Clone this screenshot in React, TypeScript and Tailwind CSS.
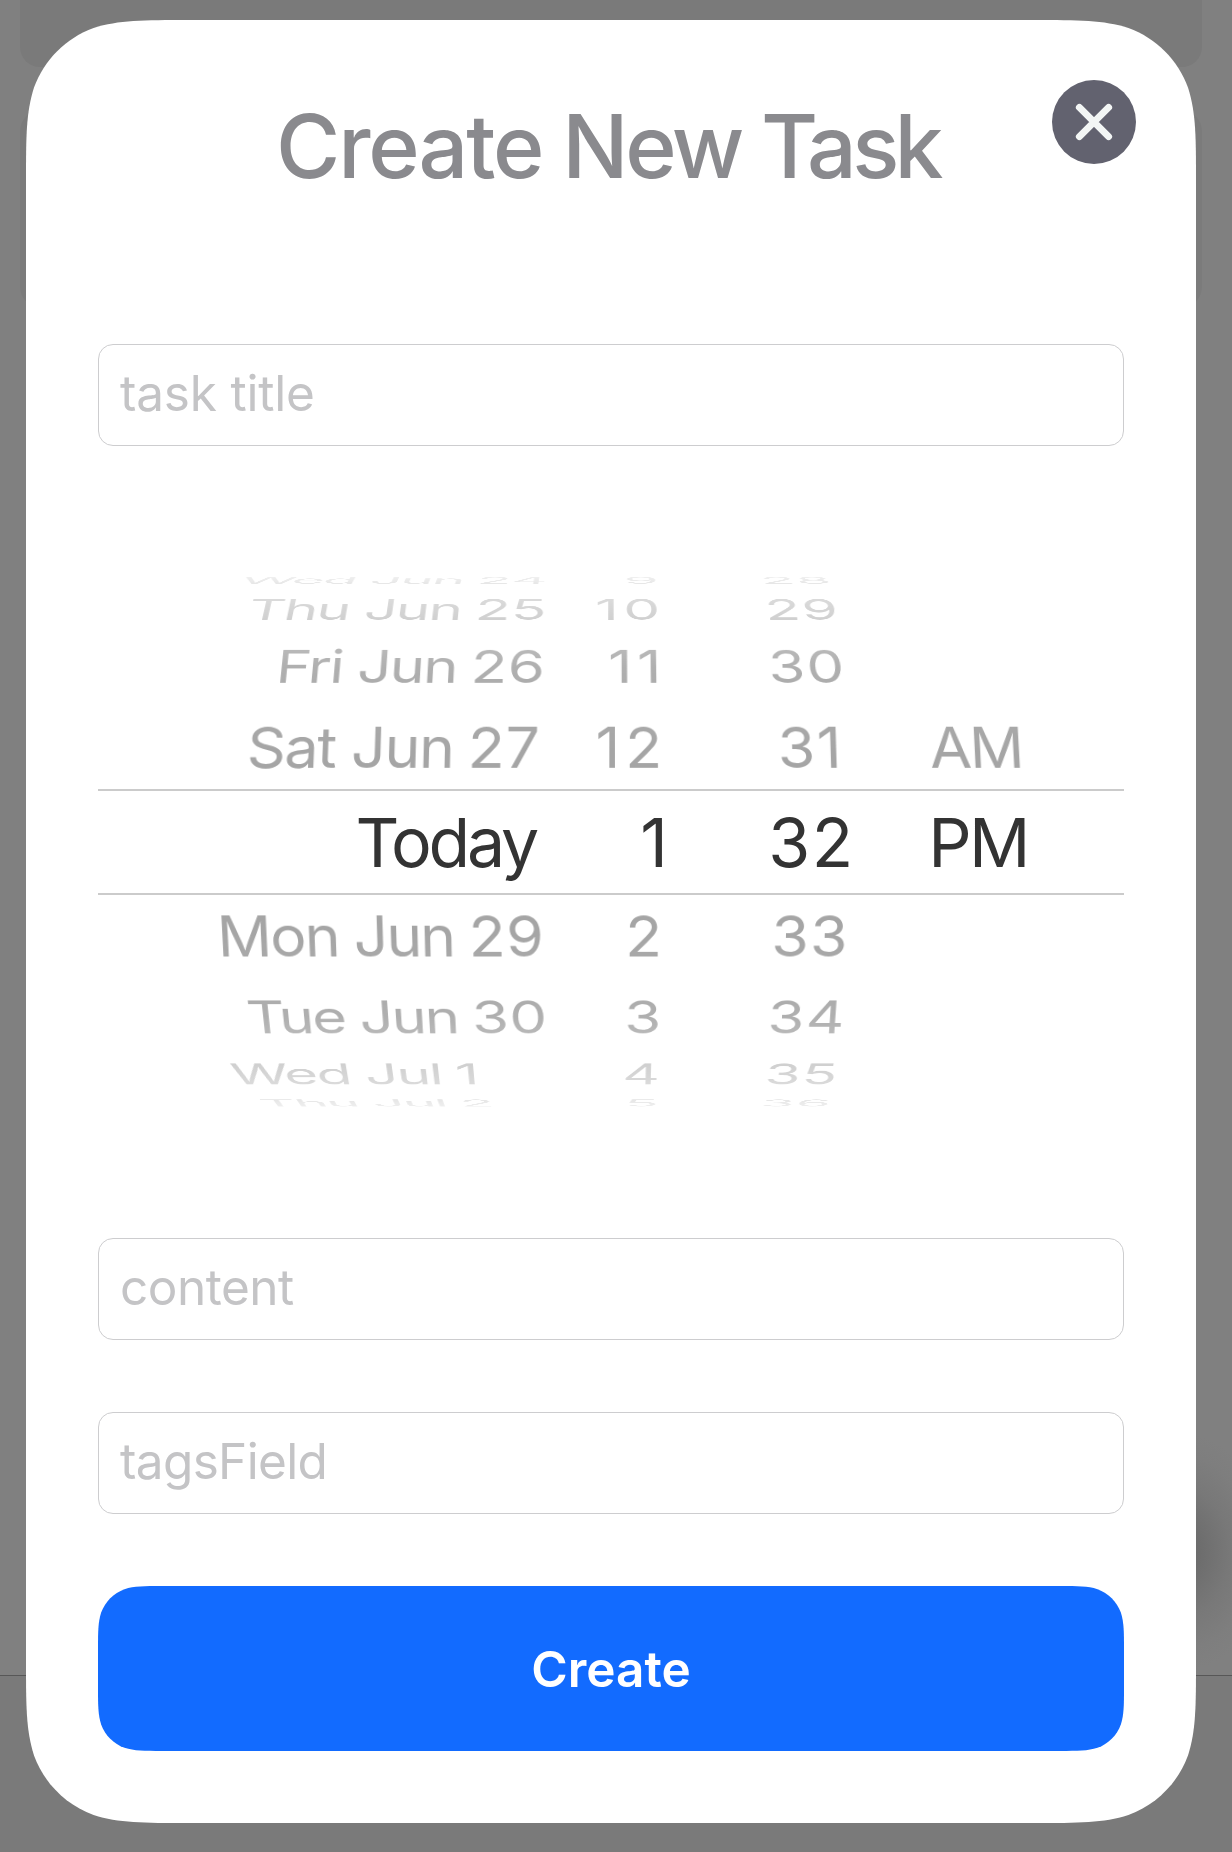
import type { CSSProperties, ReactNode } from "react";

/**
 * Outline of a rectangle with smooth "continuous" corners, where the
 * curvature eases into the straight edges instead of starting abruptly.
 */
function continuousCorners(w: number, h: number, r: number): CSSProperties {
  const a = 1.52866498 * r;
  const b = 1.08849296 * r;
  const c = 0.86840694 * r;
  const d = 0.63149379 * r;
  const e = 0.37282383 * r;
  const f = 0.16905956 * r;
  const g = 0.07491139 * r;
  const path = [
    `M${a} 0L${w - a} 0`,
    `C${w - b} 0 ${w - c} 0 ${w - d} ${g}`,
    `C${w - e} ${f} ${w - f} ${e} ${w - g} ${d}`,
    `C${w} ${c} ${w} ${b} ${w} ${a}`,
    `L${w} ${h - a}`,
    `C${w} ${h - b} ${w} ${h - c} ${w - g} ${h - d}`,
    `C${w - f} ${h - e} ${w - e} ${h - f} ${w - d} ${h - g}`,
    `C${w - c} ${h} ${w - b} ${h} ${w - a} ${h}`,
    `L${a} ${h}`,
    `C${b} ${h} ${c} ${h} ${d} ${h - g}`,
    `C${e} ${h - f} ${f} ${h - e} ${g} ${h - d}`,
    `C0 ${h - c} 0 ${h - b} 0 ${h - a}`,
    `L0 ${a}`,
    `C0 ${b} 0 ${c} ${g} ${d}`,
    `C${f} ${e} ${e} ${f} ${d} ${g}`,
    `C${c} 0 ${b} 0 ${a} 0Z`,
  ].join("");
  return { clipPath: `path("${path}")` };
}

function Backdrop() {
  return (
    <div className="absolute inset-0 flex flex-col bg-[#808080]">
      <div className="ml-5 mr-[30px] h-[67px] rounded-b-[20px] bg-[#7a7a7a]" />
      <div className="ml-5 mr-[30px] mt-11 h-[196px] rounded-[20px] bg-[#7b7b7b]" />
      <div className="mt-auto h-[177px] border-t border-[#575757] bg-[#7a7a7a]" />
      <div className="absolute right-[-43px] top-[1432px] h-[240px] w-[200px] bg-[radial-gradient(closest-side,#696969_0%,#6c6c6c_22%,#787878_55%,#7e7e7e_82%,#808080_100%)]" />
    </div>
  );
}

function CloseButton() {
  return (
    <button
      aria-label="Close"
      className="absolute right-[60px] top-[60px] flex size-[84px] items-center justify-center rounded-full bg-[#62626f]"
    >
      <svg viewBox="0 0 38 38" className="size-[38px]" fill="none" stroke="#f3f6f5" strokeWidth="7" strokeLinecap="round">
        <path d="M4.4 4.4 33.6 33.6M33.6 4.4 4.4 33.6" />
      </svg>
    </button>
  );
}

function Field({ placeholder, tracking }: { placeholder: string; tracking: string }) {
  return (
    <input
      type="text"
      placeholder={placeholder}
      className={`h-[102px] w-full shrink-0 rounded-[15px] border border-[#cdcdcf] bg-transparent px-[21px] pb-1 text-[49.5px] outline-none placeholder:text-[#c4c4c6] placeholder:opacity-100 ${tracking}`}
    />
  );
}

type Row = {
  step: number;
  height: string;
  day: string;
  dayTracking: string;
  dayNumber?: string;
  inset: string;
  hour: string;
  minute: string;
  period?: string;
};

const rows: Row[] = [
  { step: 4, height: "h-[24px]", day: "Wed Jun", dayTracking: "tracking-[-1.9px]", dayNumber: "24", inset: "-mr-[1px]", hour: "9", minute: "28" },
  { step: 3, height: "h-[34px]", day: "Thu Jun", dayTracking: "tracking-[-1.7px]", dayNumber: "25", inset: "-mr-[2px]", hour: "10", minute: "29" },
  { step: 2, height: "h-[80px]", day: "Fri Jun", dayTracking: "tracking-[-1.8px]", dayNumber: "26", inset: "-mr-[2px]", hour: "11", minute: "30" },
  { step: 1, height: "h-[82px]", day: "Sat Jun", dayTracking: "tracking-[-1.4px]", dayNumber: "27", inset: "mr-[2px]", hour: "12", minute: "31", period: "AM" },
  { step: 0, height: "h-[106px]", day: "Today", dayTracking: "tracking-[-3.2px]", inset: "mr-[6px]", hour: "1", minute: "32", period: "PM" },
  { step: -1, height: "h-[82px]", day: "Mon Jun", dayTracking: "tracking-[-1.9px]", dayNumber: "29", inset: "-mr-[2px]", hour: "2", minute: "33" },
  { step: -2, height: "h-[80px]", day: "Tue Jun", dayTracking: "tracking-[-2.1px]", dayNumber: "30", inset: "-mr-[4px]", hour: "3", minute: "34" },
  { step: -3, height: "h-[34px]", day: "Wed Jul", dayTracking: "tracking-[-1.7px]", dayNumber: "1", inset: "mr-[69px]", hour: "4", minute: "35" },
  { step: -4, height: "h-[24px]", day: "Thu Jul", dayTracking: "tracking-[-1.8px]", dayNumber: "2", inset: "mr-[57px]", hour: "5", minute: "36" },
];

const DEPTH = 2760;
const RADIUS = 276;

/** Places a row's text on the drum: further rows tilt away and shrink. */
function drumTransform(step: number): CSSProperties {
  const angle = step * 20;
  const depth = RADIUS * (1 - Math.cos((angle * Math.PI) / 180));
  const scale = 1 / (1 + depth / DEPTH);
  const shift = step > 0 ? -0.8 : 0;
  return { transform: `translateY(${shift}px) scale(${scale}) perspective(${DEPTH}px) rotateX(${angle}deg)` };
}

function Cell({ className, children }: { className: string; children?: ReactNode }) {
  return <div className={`flex ${className}`}>{children}</div>;
}

function PickerRow({ row }: { row: Row }) {
  const selected = row.step === 0;
  return (
    <div
      className={`flex shrink-0 items-center ${row.height} ${selected ? "border-y-2 border-[#cbcbcb] text-[#333333]" : "text-[#a5a5a5]"}`}
    >
      <div
        className={`grid w-full grid-cols-[444px_122px_264px_100px] items-center whitespace-nowrap ${selected ? "-mt-px text-[68px] leading-[80px]" : "-my-10 text-[61px] leading-[80px]"}`}
        style={drumTransform(row.step)}
      >
        <Cell className={`justify-end ${row.inset}`}>
          <span className={row.dayTracking}>{row.day}</span>
          {row.dayNumber && <span className="ml-[14.5px] tracking-[0.6px]">{row.dayNumber}</span>}
        </Cell>
        <Cell className={selected ? "-mr-1 justify-end" : "-mr-[3.5px] justify-end tracking-[5px]"}>{row.hour}</Cell>
        <Cell className="justify-center pl-[31px] tracking-[1.4px]">{row.minute}</Cell>
        <Cell className={selected ? "justify-center tracking-[-2.7px]" : "justify-center tracking-[-2px]"}>{row.period}</Cell>
      </div>
    </div>
  );
}

function DateTimePicker() {
  return (
    <div className="flex h-[648px] shrink-0 flex-col justify-center [mask-image:linear-gradient(to_bottom,transparent_48px,rgb(0_0_0/0.19)_60px,rgb(0_0_0/0.27)_66px,rgb(0_0_0/0.41)_82px,rgb(0_0_0/0.53)_102px,rgb(0_0_0/0.79)_133px,rgb(0_0_0/0.89)_150px,rgb(0_0_0/0.97)_214px,black_234px,black_414px,rgb(0_0_0/0.97)_434px,rgb(0_0_0/0.89)_498px,rgb(0_0_0/0.79)_515px,rgb(0_0_0/0.53)_546px,rgb(0_0_0/0.41)_566px,rgb(0_0_0/0.27)_582px,rgb(0_0_0/0.19)_588px,transparent_600px)]">
      {rows.map((row) => (
        <PickerRow key={row.step} row={row} />
      ))}
    </div>
  );
}

export default function App() {
  return (
    <div className="relative h-[1852px] w-[1232px] overflow-hidden font-['Inter',sans-serif]">
      <Backdrop />
      <div className="relative flex pl-[26px] pt-5">
        <main
          className="relative flex h-[1803px] w-[1170px] flex-col bg-white p-[72px]"
          style={continuousCorners(1170, 1803, 107)}
        >
          <CloseButton />
          <h1 className="mb-36 mr-[7px] shrink-0 text-center text-[87.6px] font-medium leading-[108px] text-[#8a8a8e]">
            <span className="tracking-[-2.1px]">Create</span>
            <span className="tracking-[-3.4px]"> New </span>
            <span className="tracking-[-4.7px]">Task</span>
          </h1>
          <div className="flex flex-col gap-[72px]">
            <Field placeholder="task title" tracking="tracking-[-0.2px]" />
            <DateTimePicker />
            <Field placeholder="content" tracking="tracking-[-0.5px]" />
            <Field placeholder="tagsField" tracking="tracking-[-0.65px]" />
            <button
              className="h-[165px] shrink-0 bg-[#126bff] pt-px text-[49.5px] font-semibold text-white"
              style={continuousCorners(1026, 165, 42)}
            >
              Create
            </button>
          </div>
        </main>
      </div>
    </div>
  );
}
